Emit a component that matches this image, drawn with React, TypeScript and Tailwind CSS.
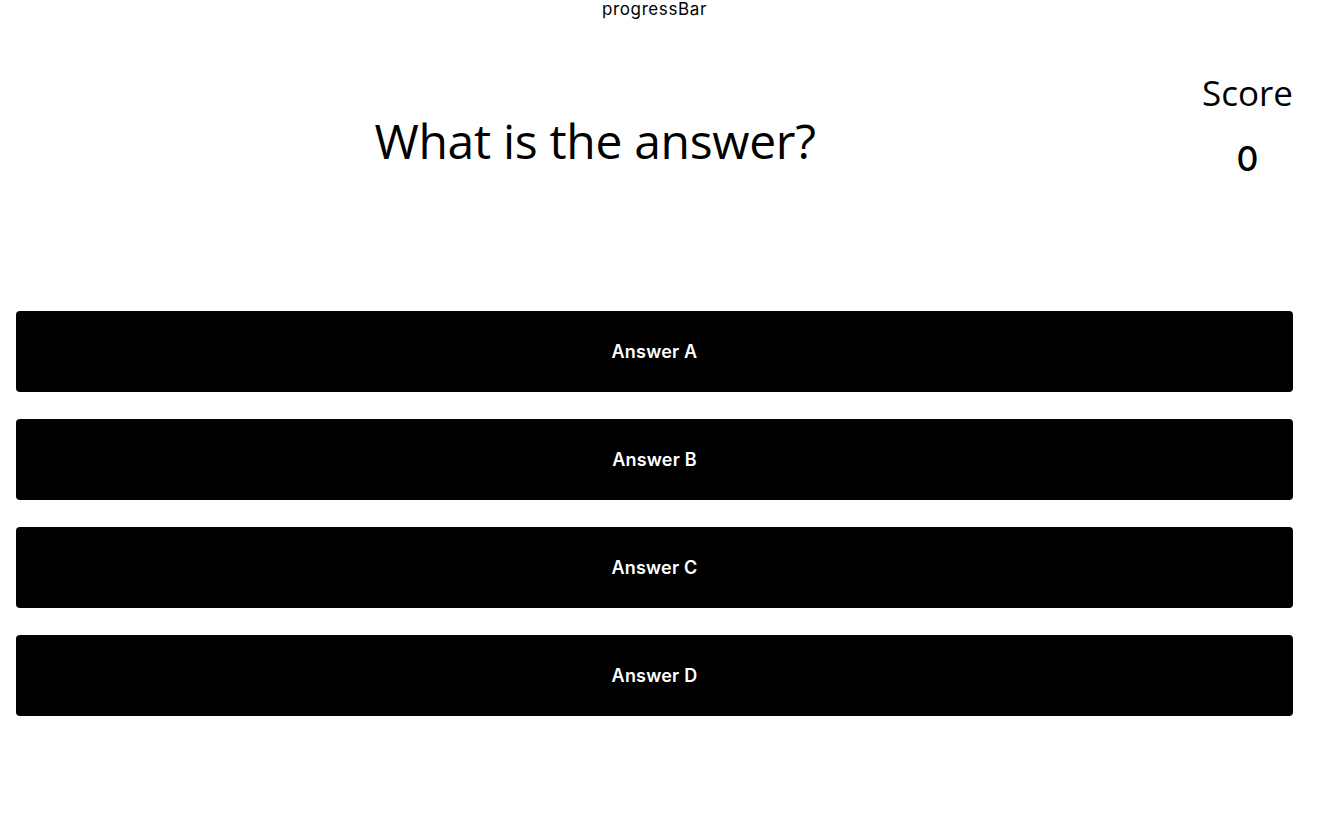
const answers = ['Answer A', 'Answer B', 'Answer C', 'Answer D']

export default function App() {
  return (
    <div className="min-h-[837px] w-full bg-white text-black pl-4 pr-6">
      <div className="text-center text-[17px] leading-[18px] tracking-[0.6px] font-['Inter',sans-serif] font-normal">
        progressBar
      </div>

      <div className="flex items-start mt-[52px]">
        <div className="flex-1 flex justify-center pr-[28px] pt-[43px]">
          <h1 className="text-[48px] leading-[56px] font-['Open_Sans',sans-serif] font-normal tracking-[-0.3px]">
            What is the answer?
          </h1>
        </div>
        <div className="flex flex-col items-center w-[91px] pt-[2px]">
          <span className="text-[35px] leading-[42px] font-['Open_Sans',sans-serif]">Score</span>
          <span className="text-[34px] leading-[40px] mt-[25px] font-['Inter',sans-serif] font-medium">0</span>
        </div>
      </div>

      <div className="flex flex-col gap-[27px] mt-[132px]">
        {answers.map(a => (
          <button
            key={a}
            className="h-[81px] w-full rounded bg-black text-white text-[18px] tracking-[0.2px] font-semibold font-['Inter',sans-serif]"
          >
            {a}
          </button>
        ))}
      </div>
    </div>
  )
}
